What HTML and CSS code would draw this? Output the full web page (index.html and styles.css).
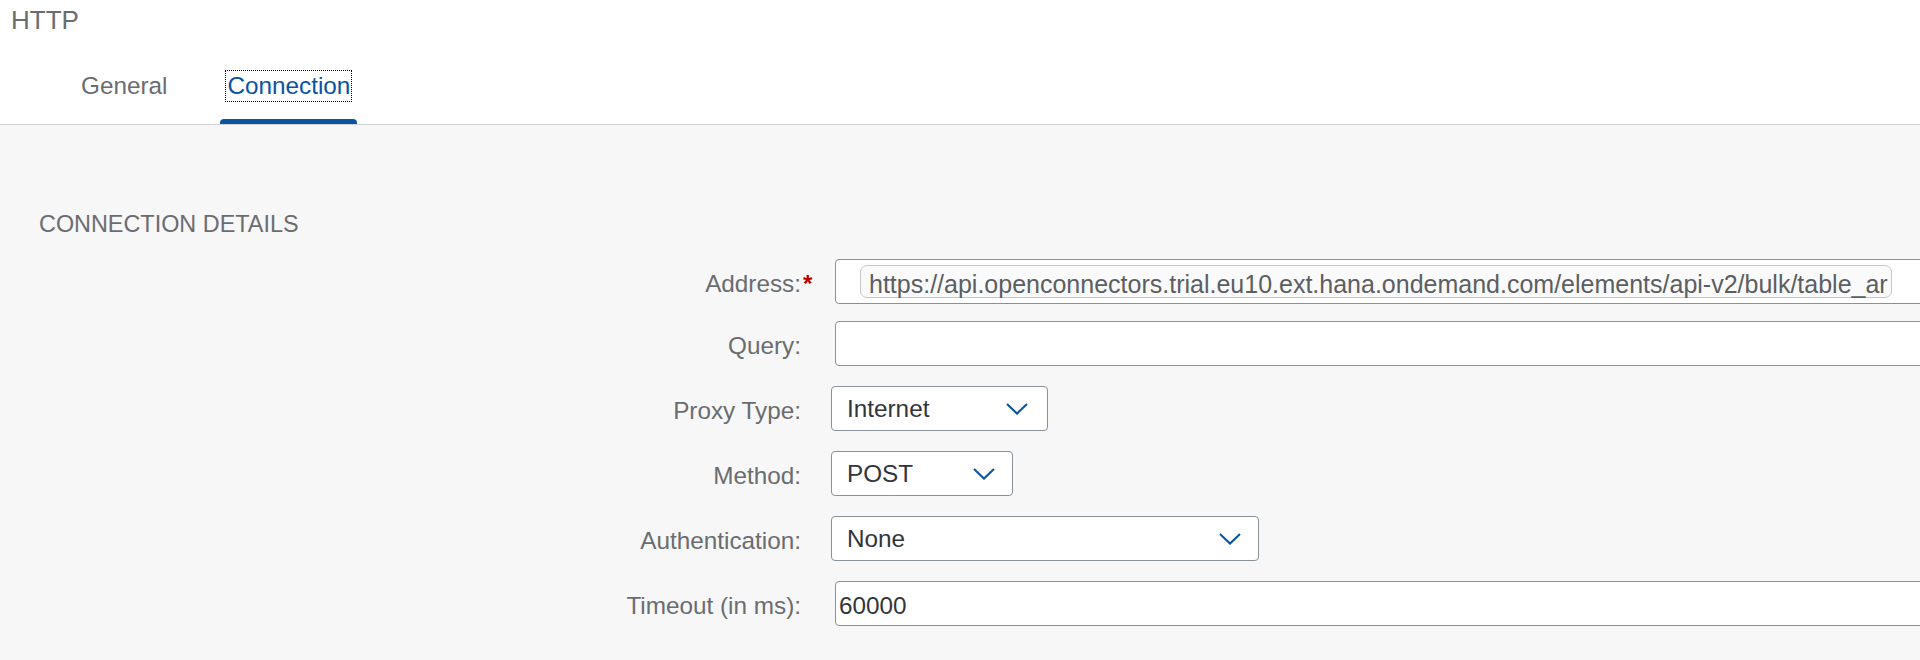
FILE: index.html
```html
<!DOCTYPE html>
<html lang="en">
<head>
<meta charset="utf-8">
<title>HTTP - Connection</title>
<link rel="stylesheet" href="styles.css">
</head>
<body>
<div class="page">
  <header class="head">
    <div class="title">HTTP</div>
    <nav class="tabs">
      <div class="tab"><span class="tab-label">General</span></div>
      <div class="tab tab--active"><span class="tab-label tab-label--focus">Connection</span><span class="tab-ind"></span></div>
    </nav>
  </header>
  <main class="content">
    <h2 class="section-title">CONNECTION DETAILS</h2>
    <div class="form">
      <div class="row">
        <label class="label">Address:<span class="req">*</span></label>
        <div class="input input--wide input--token">
          <span class="token">https://api.openconnectors.trial.eu10.ext.hana.ondemand.com/elements/api-v2/bulk/table_ar</span>
        </div>
      </div>
      <div class="row row--tight">
        <label class="label">Query:</label>
        <div class="input input--wide"></div>
      </div>
      <div class="row">
        <label class="label">Proxy Type:</label>
        <div class="select select--proxy">
          <span class="select-value">Internet</span>
          <svg class="chev" width="22" height="12" viewBox="0 0 22 12"><polyline points="1,1 11,10.5 21,1" fill="none" stroke="#0854a0" stroke-width="2"/></svg>
        </div>
      </div>
      <div class="row">
        <label class="label">Method:</label>
        <div class="select select--method">
          <span class="select-value">POST</span>
          <svg class="chev" width="22" height="12" viewBox="0 0 22 12"><polyline points="1,1 11,10.5 21,1" fill="none" stroke="#0854a0" stroke-width="2"/></svg>
        </div>
      </div>
      <div class="row">
        <label class="label">Authentication:</label>
        <div class="select select--auth">
          <span class="select-value">None</span>
          <svg class="chev" width="22" height="12" viewBox="0 0 22 12"><polyline points="1,1 11,10.5 21,1" fill="none" stroke="#0854a0" stroke-width="2"/></svg>
        </div>
      </div>
      <div class="row">
        <label class="label">Timeout (in ms):</label>
        <div class="input input--wide"><span class="input-value">60000</span></div>
      </div>
    </div>
  </main>
</div>
</body>
</html>
```

FILE: styles.css
```css
html, body {
  margin: 0;
  padding: 0;
  height: 100%;
  overflow: hidden;
}

body {
  background: #f7f7f7;
  font-family: "Liberation Sans", Arial, sans-serif;
  color: #32363a;
}

.page {
  min-height: 100%;
}

.head {
  background: #ffffff;
}

.title {
  padding: 5px 0 0 11px;
  font-size: 26px;
  line-height: 30px;
  color: #6a6d70;
}

.tabs {
  display: flex;
  gap: 46px;
  height: 89px;
  padding-left: 74px;
  border-bottom: 1px solid #d0d2d4;
}

.tab {
  display: flex;
  flex-direction: column;
  padding-top: 36px;
}

.tab-label {
  margin: 0 6px;
  padding: 1px;
  font-size: 24.3px;
  line-height: 28px;
  color: #6a6d70;
}

.tab--active .tab-label {
  color: #0854a0;
}

.tab-label--focus {
  outline: 1px dotted #000000;
}

.tab-ind {
  margin-top: auto;
  height: 5px;
  background: #0854a0;
  border-radius: 4px 4px 0 0;
}

.content {
  padding: 86px 0 0 39px;
}

.section-title {
  margin: 0;
  font-size: 23.4px;
  line-height: 27px;
  font-weight: normal;
  color: #6a6d70;
}

.form {
  display: flex;
  flex-direction: column;
  gap: 20px;
  margin-top: 21px;
}

.row {
  display: grid;
  grid-template-columns: 762px 1fr;
  column-gap: 30px;
  align-items: center;
  height: 45px;
}

.row--tight {
  margin-top: -3px;
}

.label {
  padding-top: 4px;
  text-align: right;
  font-size: 24.3px;
  line-height: 28px;
  color: #6a6d70;
  white-space: nowrap;
}

.req {
  margin-left: 2px;
  margin-right: -11.5px;
  color: #bb0000;
  font-weight: bold;
}

.input,
.select {
  box-sizing: border-box;
  height: 45px;
  background: #ffffff;
  border: 1px solid #89919a;
  border-radius: 4px;
  font-size: 24.3px;
  color: #32363a;
}

.input {
  display: flex;
  align-items: center;
  padding-left: 3px;
}

.input--wide {
  margin-left: 4px;
  width: 1200px;
}

.input--token {
  padding-left: 24px;
}

.token {
  box-sizing: border-box;
  display: block;
  width: 1032px;
  height: 33px;
  padding: 5px 8px 0;
  font-size: 25px;
  line-height: 27px;
  background: #fafafa;
  border: 1px solid #c4c6c8;
  border-radius: 7px;
  color: #5b5e62;
  white-space: nowrap;
  overflow-x: clip;
  overflow-y: visible;
}

.input-value {
  line-height: 28px;
  padding-top: 4px;
}

.select {
  display: flex;
  align-items: center;
  justify-content: space-between;
  padding: 0 17px 0 15px;
}

.select-value {
  line-height: 28px;
}

.select--proxy { width: 217px; padding-right: 19px; }
.select--method { width: 182px; }
.select--auth { width: 428px; }

.chev {
  display: block;
  flex: none;
}
```
